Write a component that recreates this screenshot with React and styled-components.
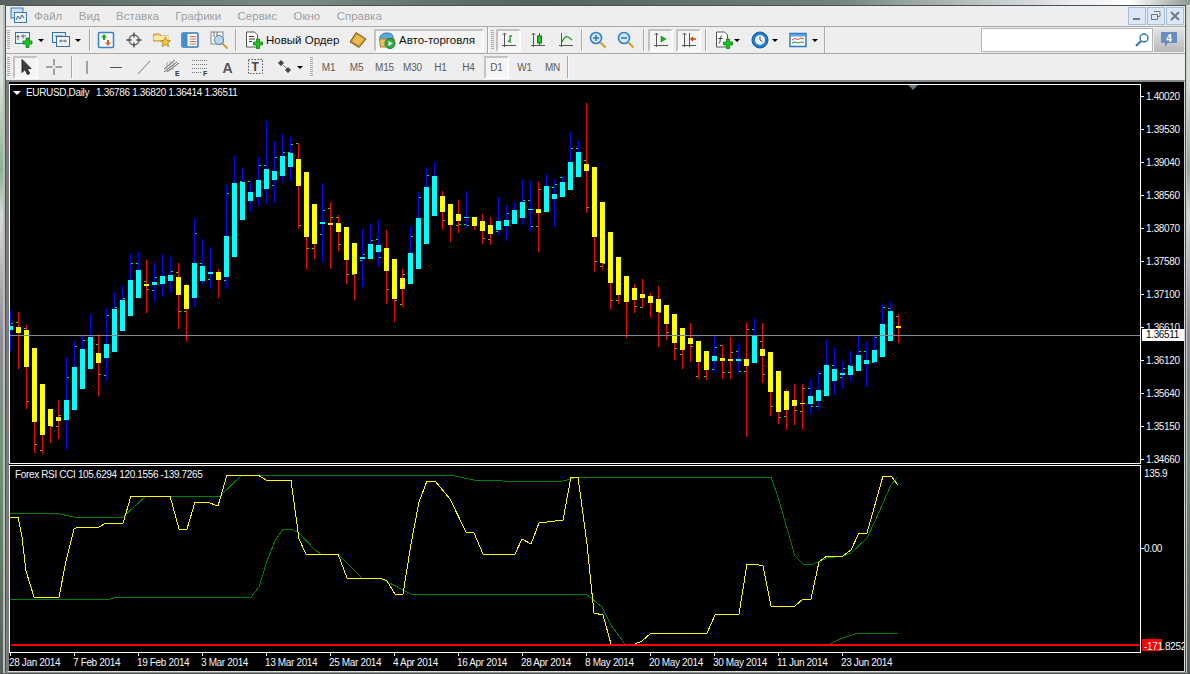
import styled, { createGlobalStyle } from 'styled-components';

const GlobalStyle = createGlobalStyle`
  html, body { margin: 0; padding: 0; background: #000; }
  * { box-sizing: border-box; }
`;

// high, low, body top, body bottom, up candle, left tick, right tick
const CANDLES = [
  [310,351,326,330,1,0,323],[312,369,327,333,0,322,0],[325,409,330,367,0,328,401],[348,453,348,422,0,0,444],
  [384,454,384,435,0,450,0],[409,443,409,426,0,0,426],[400,439,417,421,0,426,415],[357,450,400,420,1,0,377],
  [341,410,367,410,1,0,346],[335,389,349,389,1,0,340],[314,369,337,369,1,0,0],[334,396,353,363,0,344,374],
  [308,381,344,358,1,375,315],[292,352,309,352,1,0,307],[286,331,300,331,1,0,298],[254,316,280,316,1,0,263],
  [252,298,270,298,1,263,0],[260,313,284,286,0,281,289],[263,302,282,285,1,290,277],[254,297,276,284,1,0,0],
  [257,293,275,281,1,0,271],[263,329,277,295,0,272,311],[284,342,285,309,0,311,0],[218,307,263,298,1,0,233],
  [239,285,266,281,1,263,0],[247,289,272,274,1,279,0],[269,298,272,280,0,0,0],[185,289,236,277,1,280,193],
  [156,257,183,257,1,0,0],[168,220,182,220,1,181,0],[182,212,192,201,1,181,0],[157,206,180,197,1,0,165],
  [121,204,169,189,1,165,0],[141,203,171,180,1,185,157],[134,182,156,176,1,0,152],[137,181,153,167,1,152,144],
  [143,229,159,186,0,143,225],[172,270,172,237,0,0,248],[204,259,204,244,0,248,0],[183,262,222,224,1,234,210],
  [202,269,223,225,0,208,217],[215,251,223,232,0,217,244],[227,284,227,260,0,0,274],[243,300,243,274,0,274,0],
  [229,287,257,259,1,260,254],[224,259,244,259,1,0,240],[220,267,245,252,1,239,257],[230,304,248,271,0,0,289],
  [259,322,259,299,0,0,300],[269,307,278,289,0,304,274],[226,284,253,284,1,0,236],[192,269,218,269,1,0,197],
  [167,244,187,244,1,0,175],[162,216,176,216,1,0,0],[191,230,196,212,0,0,220],[204,242,204,225,0,0,0],
  [200,233,214,221,0,225,224],[191,228,217,218,1,224,225],[217,230,217,226,0,0,0],[214,244,221,231,0,0,238],
  [217,245,225,234,0,239,0],[197,235,221,230,1,231,0],[205,241,220,226,1,0,213],[202,224,210,224,1,0,0],
  [180,225,202,218,1,0,200],[181,231,209,210,1,200,226],[182,252,209,213,0,226,189],[174,212,186,212,1,0,0],
  [179,227,194,199,1,187,184],[176,197,182,197,1,177,0],[132,190,162,190,1,0,148],[140,177,152,177,1,148,0],
  [103,213,164,171,0,160,207],[167,272,167,237,0,0,261],[202,270,202,263,0,266,263],[232,310,232,283,0,0,300],
  [257,304,257,295,0,300,0],[276,338,276,302,0,0,0],[284,313,288,300,0,0,306],[279,308,294,298,0,307,0],
  [293,318,296,303,0,0,0],[286,347,299,312,0,0,312],[305,340,305,324,0,0,332],[314,360,314,343,0,0,348],
  [328,369,328,350,0,354,0],[323,362,338,344,0,0,346],[341,379,341,362,0,376,0],[351,380,351,370,0,376,0],
  [336,372,356,361,1,369,347],[345,379,358,361,0,345,372],[337,379,359,361,0,372,352],[343,373,359,361,1,351,371],
  [322,437,359,366,0,371,329],[318,363,336,363,1,329,0],[323,383,349,356,0,341,374],[352,416,352,392,0,0,406],
  [371,424,371,412,0,0,417],[389,430,391,410,0,416,0],[384,425,400,406,0,0,410],[384,430,403,404,0,411,388],
  [379,414,396,404,1,388,406],[370,410,390,401,1,406,373],[340,396,365,396,1,0,0],[347,395,369,381,1,365,0],
  [361,389,373,375,1,377,368],[351,382,366,375,1,365,0],[335,371,355,371,1,0,351],[342,387,360,364,1,351,0],
  [336,365,350,362,1,362,337],[304,357,324,357,1,0,307],[302,341,311,341,1,308,0],[314,343,326,328,0,316,0],
];

const YELLOW_LINE = '10,517 18,517 22,537 26,571 34,597 59,597 66,561 74,529 78,527 99,527 106,523 123,523 131,496 170,496 179,529 187,529 195,502 207,502 218,506 227,475 258,475 266,480 291,480 299,539 306,554 338,554 347,578 380,578 387,581 395,594 403,594 411,544 419,502 427,481 435,481 450,499 466,532 474,533 483,554 515,554 522,539 531,544 539,523 547,522 563,520 571,477 578,477 587,544 594,613 603,615 611,644 635,644 642,641 651,633 707,633 715,615 739,614 747,564 755,564 763,566 771,606 795,606 803,599 811,599 819,562 827,556 843,556 851,550 859,533 867,533 883,476 891,476 898,485';
const GREEN_TOP = '10,513 55,513 74,517 123,517 146,496 220,496 242,475 450,475 474,480 503,481 563,481 578,477 771,477 778,497 795,556 803,564 813,564 827,558 843,556 851,553 867,538 875,521 883,503 891,485 898,477';
const GREEN_LOW = '10,599 110,599 118,597 251,597 259,587 267,561 275,541 283,529 291,529 299,533 315,550 321,554 338,554 362,578 380,578 411,594 586,594 602,607 611,625 625,644 830,644 840,639 858,633 898,633';

const PRICES = ['1.40020','1.39530','1.39040','1.38560','1.38070','1.37580','1.37100','1.36610','1.36120','1.35640','1.35150','1.34660'];
const DATES = ['28 Jan 2014','7 Feb 2014','19 Feb 2014','3 Mar 2014','13 Mar 2014','25 Mar 2014','4 Apr 2014','16 Apr 2014','28 Apr 2014','8 May 2014','20 May 2014','30 May 2014','11 Jun 2014','23 Jun 2014'];
const MENU = ['Файл','Вид','Вставка','Графики','Сервис','Окно','Справка'];
const PERIODS = ['M1','M5','M15','M30','H1','H4','D1','W1','MN'];

const Desktop = styled.div`
  width: 1190px;
  height: 674px;
  padding: 5px 4px 1px 5px;
  overflow: hidden;
  background:
    linear-gradient(90deg, #59615f 0, #7d8a84 25%, #56605c 45%, #75817c 70%, #e8edf0 90%, #fff 95%, #8d9894 100%) top / 100% 5px no-repeat,
    linear-gradient(180deg, #d6dad6 0, #d9e2d8 12%, #8fae90 25%, #d5dcd8 32%, #8f8a96 50%, #6f9474 68%, #555c58 100%);
`;

const Window = styled.div`
  height: 668px;
  display: flex;
  flex-direction: column;
  background: #eeeeee;
  border: 1px solid #4a5053;
  border-bottom-color: #8a8f90;
  box-shadow: -2px 0 0 #b9bdbc, 1px 0 0 #c8cac8;
  font-family: "Liberation Sans", Arial, sans-serif;
`;

const MenuBar = styled.div`
  height: 21px;
  flex: none;
  display: flex;
  align-items: center;
  padding-left: 4px;
  border-bottom: 1px solid #a9a9a9;
`;

const MenuItem = styled.span`
  margin-left: ${p => p.$first ? 6 : 16.5}px;
  font-size: 11.5px;
  color: #a0a0a0;
`;

const WindowButtons = styled.div`
  margin-left: auto;
  margin-right: 1px;
  display: flex;
  gap: 1px;
`;

const WindowButton = styled.div`
  width: 18px;
  height: 18px;
  display: flex;
  align-items: center;
  justify-content: center;
  background: #dbe7f4;
  border: 1px solid #a5bdd8;
`;

const Toolbar = styled.div`
  height: ${p => p.$h}px;
  flex: none;
  display: flex;
  align-items: center;
  border-bottom: ${p => p.$line ? '1px solid #a9a9a9' : 'none'};
`;

const Grip = styled.div`
  width: 3px;
  height: 20px;
  flex: none;
  margin-left: ${p => p.$ml || 0}px;
  background: repeating-linear-gradient(180deg, #a9a9a9 0 1px, #eeeeee 1px 2px);
`;

const Sep = styled.div`
  width: 2px;
  height: ${p => p.$tall ? 26 : 22}px;
  flex: none;
  margin-left: ${p => p.$ml || 0}px;
  background: #a9a9a9;
  border-right: 1px solid #f9f9f9;
`;

const Slot = styled.div`
  width: 18px;
  height: 18px;
  flex: none;
  margin-left: ${p => p.$ml || 0}px;
  display: flex;
  align-items: center;
  justify-content: center;
`;

const Caret = styled.div`
  width: 0;
  height: 0;
  flex: none;
  margin-left: ${p => p.$ml || 0}px;
  border-left: 3px solid transparent;
  border-right: 3px solid transparent;
  border-top: 3px solid #000;
`;

const Toggle = styled.div`
  width: ${p => p.$w || 25}px;
  height: 23px;
  flex: none;
  margin-left: ${p => p.$ml || 0}px;
  display: flex;
  align-items: center;
  justify-content: ${p => p.$start ? 'flex-start' : 'center'};
  padding-left: ${p => p.$start ? 1 : 0}px;
  background: #f4f4f4;
  border: 2px solid;
  border-color: #c3c3c3 #fbfbfb #fbfbfb #c3c3c3;
`;

const ActionLabel = styled.span`
  margin-left: ${p => p.$ml || 0}px;
  width: ${p => p.$w}px;
  flex: none;
  font-size: 11.5px;
  color: #111;
  white-space: nowrap;
`;

const Period = styled.div`
  width: 25px;
  height: 23px;
  flex: none;
  margin-left: 3px;
  display: flex;
  align-items: center;
  justify-content: center;
  font-size: 10px;
  color: #5c5c5c;
  letter-spacing: -0.2px;
  background: ${p => p.$on ? '#f4f4f4' : 'transparent'};
  border: 2px solid;
  border-color: ${p => p.$on ? '#c3c3c3 #fbfbfb #fbfbfb #c3c3c3' : 'transparent'};
`;

const SearchBox = styled.div`
  width: 172px;
  height: 24px;
  flex: none;
  margin-left: auto;
  display: flex;
  align-items: center;
  justify-content: flex-end;
  padding-right: 3px;
  background: #fff;
  border: 1px solid #b4b4b4;
`;

const BubbleButton = styled.div`
  width: 30px;
  height: 24px;
  flex: none;
  margin: 0 1px;
  display: flex;
  align-items: center;
  justify-content: center;
  background: linear-gradient(180deg, #e4e4e4, #b9b9b9);
`;

const ChartFrame = styled.div`
  flex: 1;
  min-height: 0;
  padding-top: 2px;
  background: #000;
  border-top: 2px solid #85888a;
  border-left: 3px solid #7a7a7a;
  border-right: 1px solid #d8d8d8;
  border-bottom: 1px solid #dcdcdc;
  font-size: 10px;
  letter-spacing: -0.35px;
  color: #f2f7ff;
`;

const PaneRow = styled.div`
  height: ${p => p.$h}px;
  margin-bottom: ${p => p.$mb || 0}px;
  display: flex;
`;

const Plot = styled.div`
  width: 1132px;
  flex: none;
  position: relative;
  overflow: hidden;
  border: 1px solid #fff;
  svg { display: block; }
`;

const Legend = styled.div`
  position: absolute;
  left: ${p => p.$left}px;
  top: ${p => p.$top}px;
  display: flex;
  align-items: center;
  white-space: nowrap;
`;

const LegendArrow = styled.span`
  width: 0;
  height: 0;
  margin-right: 5px;
  border-left: 4px solid transparent;
  border-right: 4px solid transparent;
  border-top: 4px solid #fff;
`;

const LegendValues = styled.span`
  margin-left: 7px;
`;

const Axis = styled.div`
  flex: 1;
  position: relative;
  min-width: 0;
  margin-top: ${p => p.$mt || 0}px;
  overflow: ${p => p.$clip ? 'hidden' : 'visible'};
`;

const AxisLabel = styled.div`
  position: relative;
  z-index: 1;
  height: ${p => p.$h || 33}px;
  display: flex;
  align-items: center;
  padding-left: ${p => p.$pl || 5}px;
  white-space: nowrap;
  background: ${p => p.$noTick ? 'none' : 'linear-gradient(#fff, #fff) 0 50% / 3px 1px no-repeat'};
`;

const PriceTag = styled.div`
  position: absolute;
  z-index: 2;
  left: 1px;
  top: 249px;
  width: 42px;
  height: 12px;
  background: #fff;
  color: #000;
  font-size: 10px;
  line-height: 12px;
  padding-left: 4px;
`;

const RedTag = styled.div`
  position: absolute;
  z-index: 0;
  left: 1px;
  top: 174px;
  width: 20px;
  height: 12px;
  background: #ff0000;
`;

const TimeAxis = styled.div`
  height: 18px;
  display: flex;
`;

const TimeLabel = styled.div`
  width: 64px;
  flex: none;
  display: flex;
  align-items: center;
  white-space: nowrap;
  background: linear-gradient(#fff, #fff) 1px 0 / 1px 3px no-repeat;
`;

const Svg = ({ children, w = 18, h = 18 }) => (
  <svg width={w} height={h} viewBox={`0 0 ${w} ${h}`} fill="none">{children}</svg>
);

const Plus = ({ x = 0, y = 0 }) => (
  <path transform={`translate(${x} ${y})`} d="M11 7h3v3h3v3h-3v3.500h-3V13H8v-3h3z" fill="#1fc41f" stroke="#0b7d0b" strokeWidth=".8" />
);

// vertical price axis with an arrow head and the time axis under it
const AxesShape = ({ children, second }) => (
  <Svg w={16} h={16}>
    <path d="M3.500 1v14M1 13.500h14" stroke="#555" strokeWidth="1" />
    {second && <path d="M8.500 1v14" stroke="#555" strokeWidth="1" />}
    <path d="M3.500 1l-2 2M3.500 1l2 2" stroke="#555" strokeWidth=".8" />
    {children}
  </Svg>
);

const AppLogo = () => (
  <Svg>
    <rect x="1" y="1" width="12" height="10" fill="#cfe0f4" stroke="#3c78b8" />
    <rect x="4.500" y="5.500" width="12" height="10" fill="#eef5fc" stroke="#3c78b8" />
    <path d="M6 13l2-4 2 3 2-4 2 3" stroke="#2a5f9c" />
  </Svg>
);

const NewChart = () => (
  <Svg>
    <rect x=".5" y="1.500" width="14" height="11" fill="#eaf2fa" stroke="#2f70b4" />
    <path d="M3 4v5M1.500 5.500h3M6 5h5M8 3.500v4" stroke="#444" strokeWidth=".8" />
    <Plus />
  </Svg>
);

const Profiles = () => (
  <Svg>
    <rect x=".5" y="1.500" width="13" height="10" fill="#e6f0fa" stroke="#2f70b4" />
    <rect x="4.500" y="5.500" width="13" height="10" fill="#eff5fb" stroke="#2f70b4" />
    <path d="M3 5h8M7 10h8M9 8.500v3M13 8.500v3" stroke="#555" strokeWidth=".8" />
  </Svg>
);

const MarketWatch = () => (
  <Svg>
    <rect x="1.500" y="1.500" width="15" height="15" rx="1" fill="#f6f8fb" stroke="#3b82c4" strokeWidth="1.500" />
    <path d="M7 3l3 3.500H8v2.500H6V6.500H4z" fill="#1aa51a" />
    <path d="M11 15l-3-3.500h2V9h2v2.500h2z" fill="#e25a28" />
  </Svg>
);

const Crosshair = () => (
  <Svg>
    <circle cx="9" cy="9" r="5" stroke="#666" strokeWidth="1.300" />
    <path d="M9 1.500v5M9 11.500v5M1.500 9h5M11.500 9h5" stroke="#444" strokeWidth="1.300" />
  </Svg>
);

const FolderStar = () => (
  <Svg>
    <path d="M.5 3h6l1.500 2h7v5H.5z" fill="#f5d878" stroke="#b89438" />
    <path d="M.5 5h15v4H.5z" fill="#fbe9a6" />
    <path d="M12.500 6l1.500 3.300 3.500.4-2.600 2.300.8 3.500-3.200-1.900-3.200 1.900.8-3.500-2.600-2.300 3.500-.4z" fill="#f2c33c" stroke="#a8832a" strokeWidth=".8" />
  </Svg>
);

const Navigator = () => (
  <Svg>
    <rect x="1" y="2" width="16" height="14" rx="1" fill="#fafcff" stroke="#2f78c0" strokeWidth="1.500" />
    <rect x="1.500" y="2.500" width="5" height="13" fill="#3f8ed4" />
    <path d="M8.500 5.500h7M8.500 8h7M8.500 10.500h7M8.500 13h7" stroke="#d07060" />
  </Svg>
);

const ChartSearch = () => (
  <Svg>
    <rect x="1" y="1" width="12" height="12" fill="#f4f4f4" stroke="#888" />
    <circle cx="9" cy="9" r="4.500" fill="#bcd8f0" stroke="#4a84b8" />
    <path d="M12.500 12.500l5 5" stroke="#d1a52c" strokeWidth="2" />
    <path d="M4 1v5M7 1v4" stroke="#777" />
  </Svg>
);

const OrderDoc = () => (
  <Svg>
    <path d="M1.500 1h8l3 3v12h-11z" fill="#fff" stroke="#555" />
    <path d="M4 5.500h5M4 8h6M4 10.500h3" stroke="#333" />
    <Plus x="0.500" y="1" />
  </Svg>
);

const Book = () => (
  <Svg>
    <path d="M7 1.500l10 6.500-7 8.500-9-5.500z" fill="#c9962c" stroke="#7e5a1c" />
    <path d="M7.500 3.500l7.500 4.500-5 6-6.500-4z" fill="#e8bc50" />
  </Svg>
);

const AutoTrading = () => (
  <Svg w={20} h={18}>
    <path d="M3 9c-1-5 3-7 7-7s7 2 6 6z" fill="#5aa8dc" stroke="#2f78b0" />
    <path d="M2.500 8h15l-1 8h-13z" fill="#e9c35a" stroke="#a5842c" />
    <circle cx="13" cy="12.500" r="5" fill="#2fae45" stroke="#177a2a" />
    <path d="M11.500 10v5l4-2.500z" fill="#fff" />
  </Svg>
);

const BarIcon = () => (
  <AxesShape><path d="M9 11V4h2M9 9H7" stroke="#1c9a1c" strokeWidth="1.300" /></AxesShape>
);
const CandleIcon = () => (
  <AxesShape><rect x="7.500" y="4" width="4" height="7" fill="#1fc41f" stroke="#0b7d0b" /><path d="M9.500 1v3M9.500 11v2" stroke="#0b7d0b" /></AxesShape>
);
const LineIcon = () => (
  <Svg w={16} h={16}>
    <path d="M3.500 1v14M1 13.500h14" stroke="#555" />
    <path d="M4 10c2-5 4-6 6-5s3 2 4 3" stroke="#1c9a1c" strokeWidth="1.200" />
  </Svg>
);

const ZoomGlass = ({ plus }) => (
  <Svg>
    <circle cx="7" cy="7" r="5.500" fill="#d7e9f8" stroke="#2c82cc" strokeWidth="1.600" />
    <path d="M4 7h6" stroke="#2c6fb4" strokeWidth="1.500" />
    {plus && <path d="M7 4v6" stroke="#2c6fb4" strokeWidth="1.500" />}
    <path d="M11.500 11.500l5 5" stroke="#d1a52c" strokeWidth="2.400" />
  </Svg>
);

const ShiftIcon = () => (
  <AxesShape><path d="M8 4v6l5-3z" fill="#1fb81f" stroke="#0b7d0b" strokeWidth=".6" /></AxesShape>
);
const ScrollIcon = () => (
  <AxesShape second><path d="M15 7h-5M12 5L10 7l2 2" stroke="#c9401c" strokeWidth="1.300" /></AxesShape>
);

const IndicatorDoc = () => (
  <Svg>
    <path d="M1.500 1h8l3 3v12h-11z" fill="#fff" stroke="#555" />
    <path d="M7 5C5 5 5.500 7 5 11c-.2 1-.8 1-1.500 1M3.500 7.500h4" stroke="#333" />
    <Plus x="0.500" y="1" />
  </Svg>
);

const Clock = () => (
  <Svg>
    <circle cx="9" cy="9" r="8" fill="#1f7fd0" stroke="#175f9f" />
    <circle cx="9" cy="9" r="5" fill="#eef2f6" />
    <path d="M9 5.500V9l2.500 1.500" stroke="#555" />
  </Svg>
);

const Templates = () => (
  <Svg>
    <rect x="1" y="2.500" width="16" height="13" fill="#f8fbff" stroke="#2f78c0" strokeWidth="1.500" />
    <rect x="1.500" y="3" width="15" height="2.500" fill="#5aa0dc" />
    <path d="M3 9l3-1.500 3 1 3-1.500 3 1" stroke="#c9502c" />
    <path d="M3 12l3-1 3 1 3-1 3 .5" stroke="#2f9a2f" />
  </Svg>
);

const Pointer = () => (
  <Svg>
    <path d="M5 1.500v13l3-3 2.500 5 2.200-1-2.500-5H14z" fill="#3c3c3c" stroke="#2a2a2a" />
  </Svg>
);

const Cross = () => (
  <Svg>
    <path d="M9 1v6.500M9 10.500V17M1 9h6.500M10.500 9H17" stroke="#555" />
  </Svg>
);

const VLine = () => <Svg><path d="M9 3v13" stroke="#555" /></Svg>;
const HLine = () => <Svg><path d="M3 9.500h12" stroke="#555" /></Svg>;
const Trend = () => <Svg><path d="M3 16L15 3" stroke="#777" /></Svg>;

const Channel = () => (
  <Svg>
    <path d="M1 11L12 2M1 14L14 4M4 14L16 5" stroke="#666" />
    <path d="M4 4v10M7 3v10M10 3v9" stroke="#888" strokeWidth=".7" />
    <text x="12" y="17.500" fontSize="7" fontWeight="700" fontFamily="Liberation Sans" fill="#333">E</text>
  </Svg>
);

const Fibo = () => (
  <Svg>
    <path d="M1 2.500h15M1 6.500h15M1 10.500h15M1 14.500h10" stroke="#777" strokeDasharray="1 1" />
    <text x="12" y="18" fontSize="7" fontWeight="700" fontFamily="Liberation Sans" fill="#333">F</text>
  </Svg>
);

const LetterA = () => (
  <Svg><text x="3.500" y="15" fontSize="14" fontWeight="700" fontFamily="Liberation Sans" fill="#555">A</text></Svg>
);

const LetterT = () => (
  <Svg>
    <rect x="1.500" y="1.500" width="14" height="14" stroke="#555" strokeDasharray="1.500 1.500" />
    <text x="4.500" y="13" fontSize="12" fontWeight="700" fontFamily="Liberation Sans" fill="#444">T</text>
  </Svg>
);

const Arrows = () => (
  <Svg>
    <path d="M5 2l3 3-3 3-3-3zM12 9l3 3-3 3-3-3z" fill="#444" />
    <path d="M7 7l4 4" stroke="#777" />
  </Svg>
);

const SearchGlass = () => (
  <svg width="14" height="14" viewBox="0 0 14 14" fill="none">
    <circle cx="9" cy="5" r="4" stroke="#2f78c0" strokeWidth="1.500" />
    <path d="M6 8l-5 5" stroke="#2f78c0" strokeWidth="2.200" />
  </svg>
);

const Bubble = () => (
  <svg width="18" height="16" viewBox="0 0 18 16">
    <path d="M1 0h16v11H8l-3 4v-4H1z" fill="#6a8cc4" />
    <text x="9" y="9.500" textAnchor="middle" fontSize="10" fontWeight="700" fontFamily="Liberation Sans" fill="#fff">4</text>
  </svg>
);

const MinGlyph = () => <svg width="10" height="10"><path d="M1 8h7" stroke="#6c7a88" strokeWidth="2" /></svg>;
const RestoreGlyph = () => <svg width="10" height="10"><path d="M3 .5h6v5H7M.5 3.500h6v5h-6z" stroke="#6c7a88" fill="none" /></svg>;
const CloseGlyph = () => <svg width="10" height="10"><path d="M1 1l8 8M9 1l-8 8" stroke="#6c7a88" strokeWidth="2" /></svg>;

const Candles = () => CANDLES.map(([high, low, top, bottom, up, left, right], i) => {
  const x = 10 + 8 * i;
  return (
    <g key={x}>
      <rect x={x} y={high} width="1" height={low - high} fill={up ? '#0000ff' : '#ff0000'} />
      <rect x={x - 2} y={top} width="5" height={bottom - top} fill={up ? '#00ffff' : '#ffff00'} />
      {left > 0 && <rect x={x - 2} y={left} width="2" height="1" fill="#00ff00" />}
      {right > 0 && <rect x={x + 1} y={right} width="2" height="1" fill="#00ff00" />}
    </g>
  );
});

const PricePane = () => (
  <svg width="1130" height="378" viewBox="10 85 1130 378">
    <Candles />
    <rect x="10" y="335" width="1130" height="1" fill="#808890" />
    <path d="M908 85h10l-5 5z" fill="#64747f" />
  </svg>
);

const IndicatorPane = () => (
  <svg width="1130" height="186" viewBox="10 466 1130 186" fill="none" shapeRendering="crispEdges">
    <polyline points={GREEN_TOP} stroke="#008000" />
    <polyline points={GREEN_LOW} stroke="#008000" />
    <polyline points={YELLOW_LINE} stroke="#ffff00" />
    <rect x="11" y="644" width="1130" height="2" fill="#ff0000" />
  </svg>
);

export default function App() {
  return (
    <>
      <GlobalStyle />
      <Desktop>
        <Window>
          <MenuBar>
            <AppLogo />
            {MENU.map((item, i) => <MenuItem key={item} $first={i === 0}>{item}</MenuItem>)}
            <WindowButtons>
              <WindowButton><MinGlyph /></WindowButton>
              <WindowButton><RestoreGlyph /></WindowButton>
              <WindowButton><CloseGlyph /></WindowButton>
            </WindowButtons>
          </MenuBar>

          <Toolbar $h={27} $line>
            <Grip $ml={1} />
            <Slot $ml={5}><NewChart /></Slot>
            <Caret $ml={5} />
            <Slot $ml={8}><Profiles /></Slot>
            <Caret $ml={5} />
            <Sep $ml={8} />
            <Slot $ml={6}><MarketWatch /></Slot>
            <Slot $ml={10}><Crosshair /></Slot>
            <Slot $ml={10}><FolderStar /></Slot>
            <Slot $ml={10}><Navigator /></Slot>
            <Slot $ml={11}><ChartSearch /></Slot>
            <Sep $ml={7} />
            <Slot $ml={8}><OrderDoc /></Slot>
            <ActionLabel $ml={3} $w={74}>Новый Ордер</ActionLabel>
            <Slot $ml={9}><Book /></Slot>
            <Toggle $ml={7} $w={110} $start>
              <AutoTrading />
              <ActionLabel $ml={2} $w={78}>Авто-торговля</ActionLabel>
            </Toggle>
            <Sep $ml={3} $tall />
            <Grip $ml={2} />
            <Toggle $ml={2}><BarIcon /></Toggle>
            <Slot $ml={8}><CandleIcon /></Slot>
            <Slot $ml={10}><LineIcon /></Slot>
            <Sep $ml={6} />
            <Slot $ml={6}><ZoomGlass plus /></Slot>
            <Slot $ml={10}><ZoomGlass /></Slot>
            <Sep $ml={8} />
            <Toggle $ml={3}><ShiftIcon /></Toggle>
            <Toggle $ml={3}><ScrollIcon /></Toggle>
            <Sep $ml={4} />
            <Slot $ml={8}><IndicatorDoc /></Slot>
            <Caret $ml={1} />
            <Slot $ml={11}><Clock /></Slot>
            <Caret $ml={3} />
            <Slot $ml={11}><Templates /></Slot>
            <Caret $ml={5} />
            <Sep $ml={6} $tall />
            <SearchBox><SearchGlass /></SearchBox>
            <BubbleButton><Bubble /></BubbleButton>
          </Toolbar>

          <Toolbar $h={26}>
            <Grip $ml={1} />
            <Toggle $ml={3}><Pointer /></Toggle>
            <Slot $ml={7}><Cross /></Slot>
            <Sep $ml={8} />
            <Slot $ml={5}><VLine /></Slot>
            <Slot $ml={11}><HLine /></Slot>
            <Slot $ml={10}><Trend /></Slot>
            <Slot $ml={10}><Channel /></Slot>
            <Slot $ml={10}><Fibo /></Slot>
            <Slot $ml={10}><LetterA /></Slot>
            <Slot $ml={10}><LetterT /></Slot>
            <Slot $ml={11}><Arrows /></Slot>
            <Caret $ml={3} />
            <Grip $ml={7} />
            {PERIODS.map(p => <Period key={p} $on={p === 'D1'}>{p}</Period>)}
            <Sep $ml={2} />
          </Toolbar>

          <ChartFrame>
            <PaneRow $h={380} $mb={1}>
              <Plot>
                <PricePane />
                <Legend $left={3} $top={2}>
                  <LegendArrow />EURUSD,Daily<LegendValues>1.36786 1.36820 1.36414 1.36511</LegendValues>
                </Legend>
              </Plot>
              <Axis $mt={-4}>
                {PRICES.map(p => <AxisLabel key={p}>{p}</AxisLabel>)}
                <PriceTag>1.36511</PriceTag>
              </Axis>
            </PaneRow>

            <PaneRow $h={188}>
              <Plot>
                <IndicatorPane />
                <Legend $left={5} $top={3}>Forex RSI CCI 105.6294 120.1556 -139.7265</Legend>
              </Plot>
              <Axis $clip>
                <RedTag />
                <AxisLabel $h={16} $pl={3} $noTick>135.9</AxisLabel>
                <AxisLabel $h={134} $pl={3}>0.00</AxisLabel>
                <AxisLabel $h={62} $pl={3} $noTick>-171.8252</AxisLabel>
              </Axis>
            </PaneRow>

            <TimeAxis>
              {DATES.map(d => <TimeLabel key={d}>{d}</TimeLabel>)}
            </TimeAxis>
          </ChartFrame>
        </Window>
      </Desktop>
    </>
  );
}
